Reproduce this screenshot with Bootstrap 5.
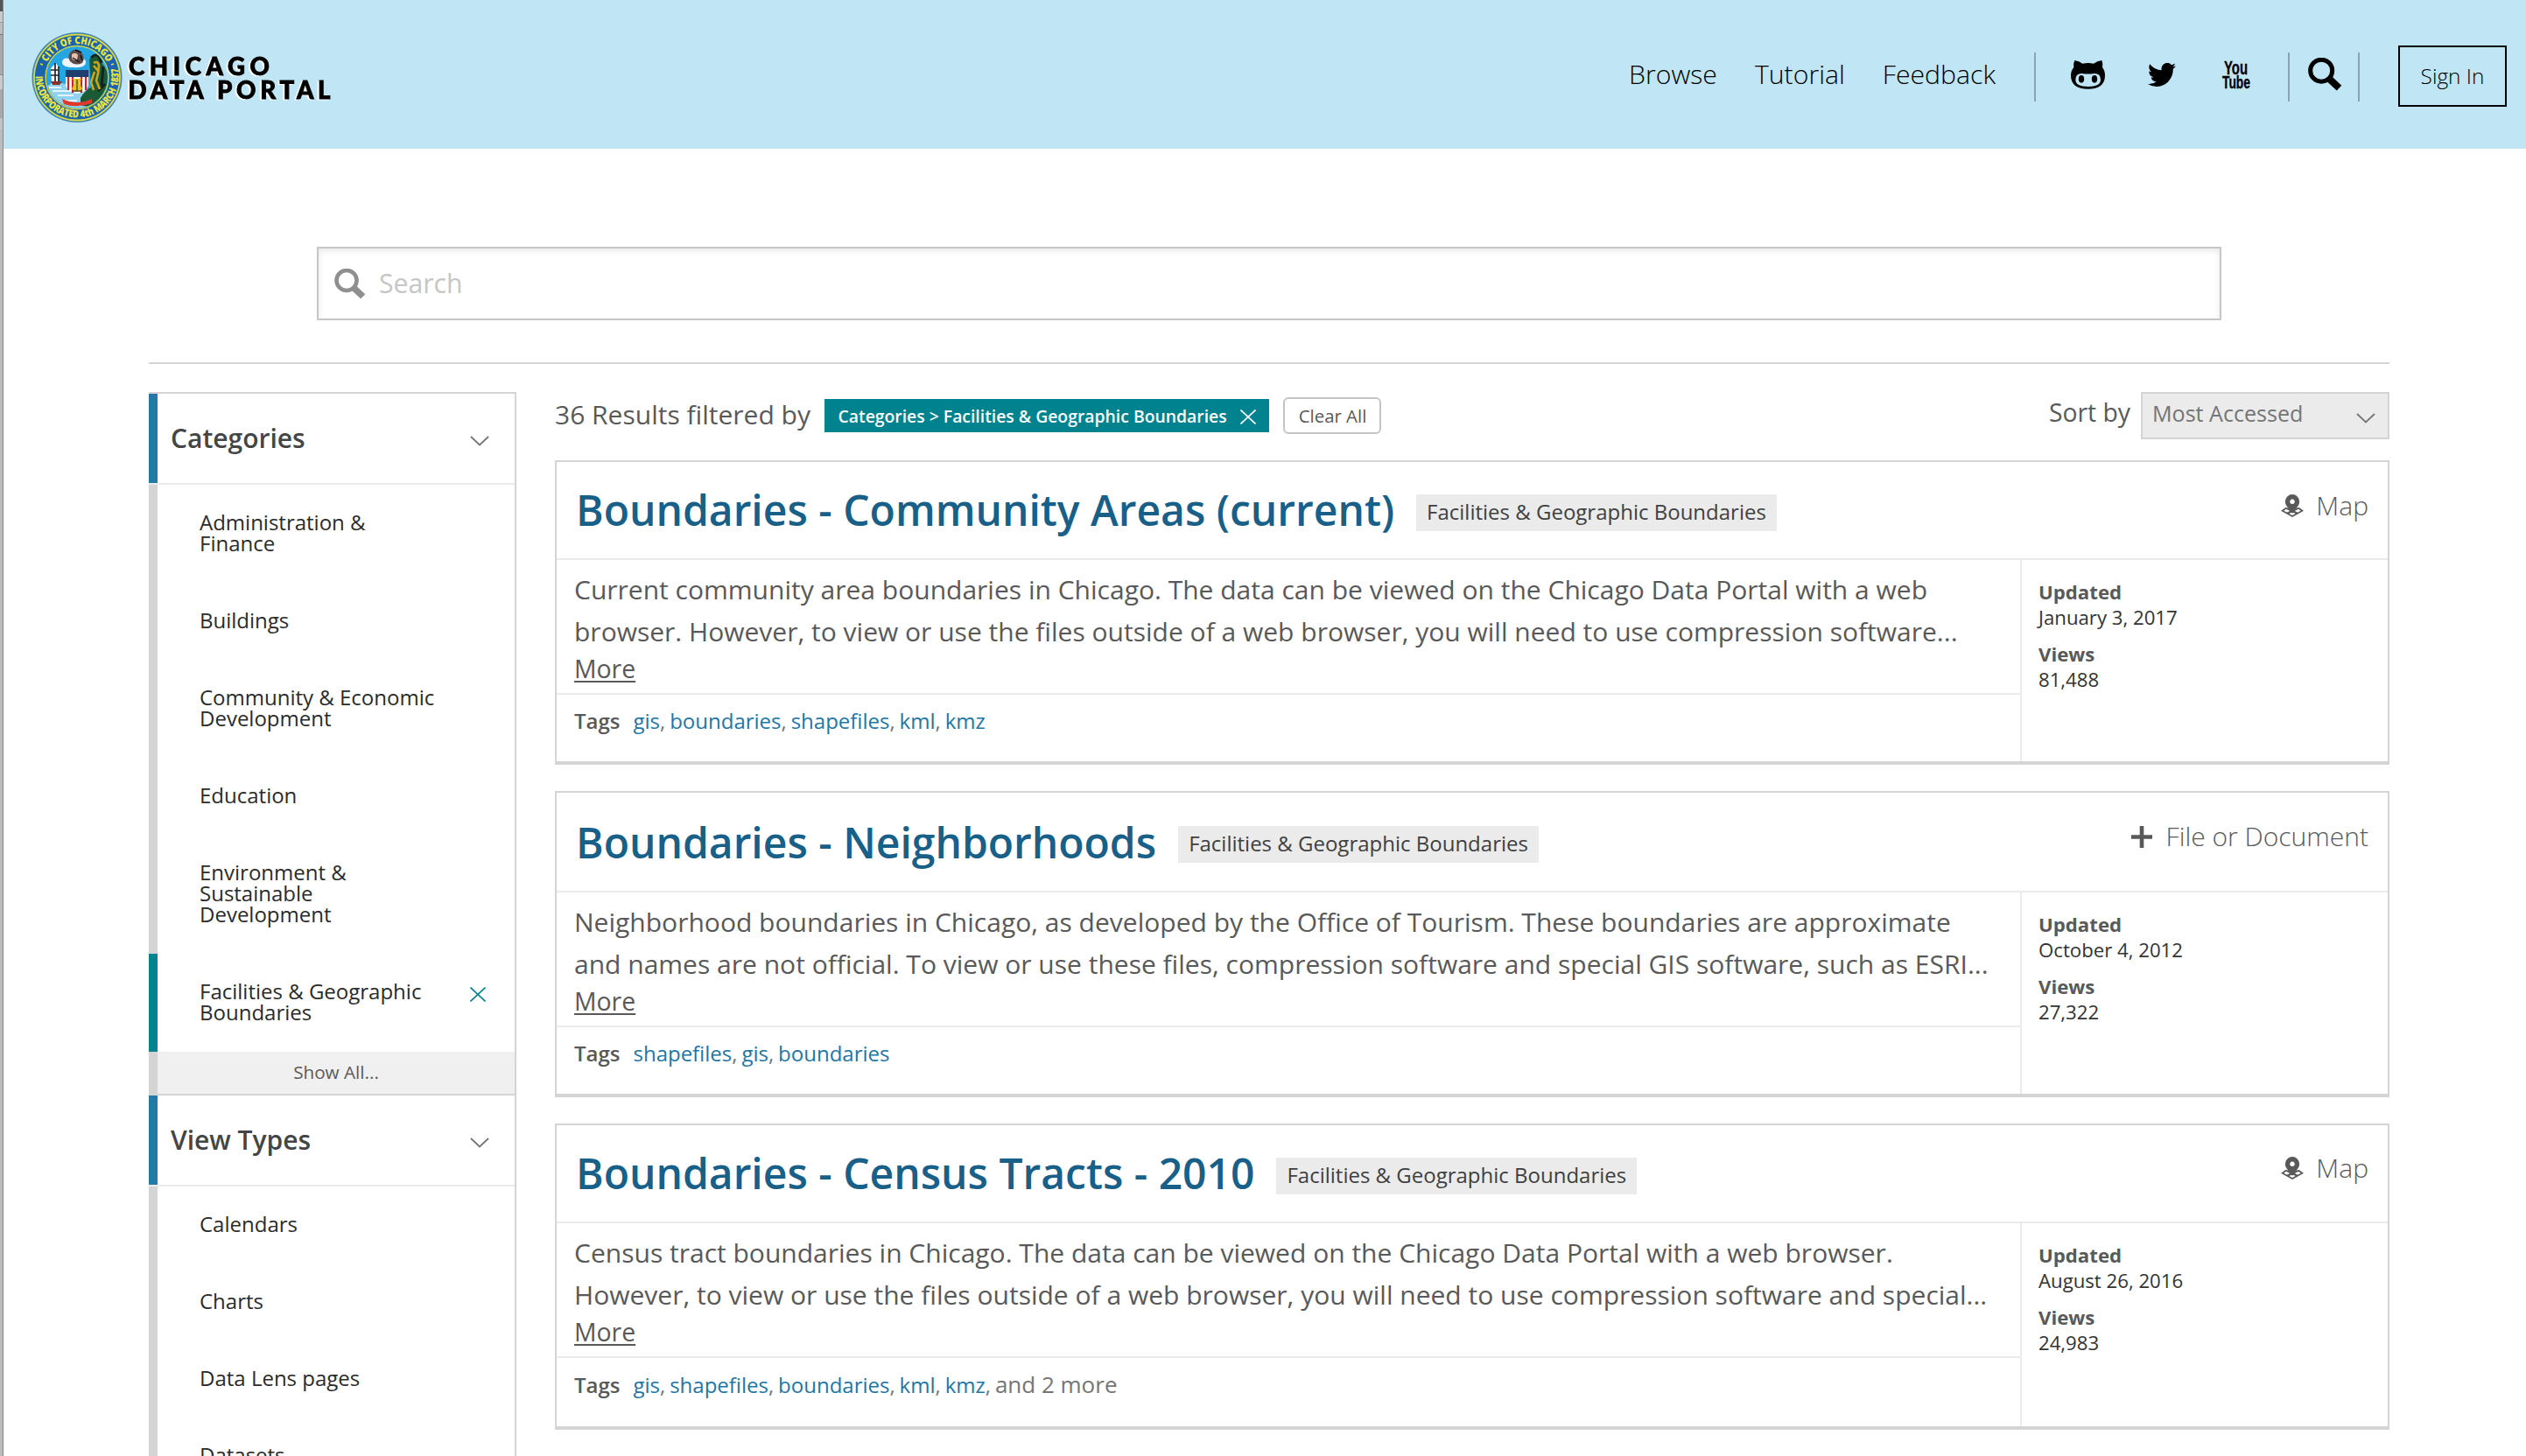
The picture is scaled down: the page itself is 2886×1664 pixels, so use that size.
<!DOCTYPE html>
<html lang="en">
<head>
<meta charset="utf-8">
<title>Chicago Data Portal</title>
<meta name="viewport" content="width=device-width, initial-scale=1">
<link rel="stylesheet" href="https://cdn.jsdelivr.net/npm/bootstrap@5.3.0/dist/css/bootstrap.min.css">
<style>
  body { font-family: "Open Sans", "Liberation Sans", sans-serif; color: #595959; background: #fff; height: 1664px; overflow: hidden; }
  a { text-decoration: none; }
  svg { display: block; flex: none; }
  .window-edge { width: 4px; flex: none; border-right: 1px solid #858585;
    background: linear-gradient(#555 0 13px, #cbcbcb 13px 25px, #999 25px 26px, #bdbdbd 26px 39px, #777 39px 40px, #a9a9a9 40px 85px, #888 85px 86px, #cbcbcb 86px 102px, #a9a9a9 102px 135px, #c4c4c4 135px 148px, #bcbcbc 148px); }
  .page-col { flex: 1 1 0; min-width: 0; }

  .site-header { height: 170px; background: #c0e5f4; padding: 0 22px 0 30px; }
  .brand-art { margin-top: 6px; }
  .brand-words { filter: drop-shadow(-1.5px 1px 0 #fff); }
  .brand-words text { font-family: Lato, "Open Sans", sans-serif; font-weight: 900; font-size: 27.6px; stroke: #000; stroke-width: .9px; }
  .top-links { gap: 44px; font-size: 30.2px; font-weight: 300; margin-right: 44px; }
  .top-links a:not(:last-child) { margin-right: -1px; }
  .top-links a, .signin { color: #000; }
  .icon-strip { color: #000; }
  .rule-v { width: 2px; height: 56px; background: #8ba4b0; margin-top: 6px; }
  .ico-cat { margin-left: 40px; }
  .ico-bird { margin-left: 49px; }
  .ico-tube { margin: 0 43px 0 53px; overflow: visible; }
  .ico-lens { margin: 0 18px 0 21px; }
  .signin { width: 124px; height: 70px; border: 2px solid #000; border-radius: 0; font-size: 24.4px; font-weight: 300; margin: 4px 0 0 44px; padding: 0; line-height: 66px; }

  .search-row { padding: 112px 348px 48px 358px; }
  .search-box { height: 84px; border: 2px solid #c6c6c6; box-shadow: inset 0 3px 7px rgba(0,0,0,.09); padding: 0 18px; gap: 15px; color: #c6c6c6; font-size: 30.2px; }
  .catalog { margin: 0 156px 0 166px; border-top: 2px solid #d4d4d4; padding-top: 32px; gap: 44px; }

  .facets { width: 420px; flex: none; border-top: 2px solid #d4d4d4; border-right: 2px solid #d4d4d4; }
  .facet-head { height: 102px; border-left: 10px solid #2379a8; padding: 0 29px 0 15px; color: #454545; font-size: 30px; font-weight: 600; }
  .facet-head span { margin-bottom: 1px; }
  .facet-head svg { margin-top: 6px; }
  .facet-line { height: 2px; background: #ebebeb; }
  .facet-item { border-left: 10px solid #d4d4d4; padding: 32px 33px 32px 48px; font-size: 24px; line-height: 24px; color: #2b2b2b; }
  .facet-item span { width: 272px; margin-top: -1px; margin-bottom: 1px; }
  .facet-item svg { margin-top: 6px; }
  .facet-item.chosen { border-left-color: #00838f; }
  .facet-all { height: 48px; border-left: 10px solid #d4d4d4; background: #f0f0f0; font-size: 20.7px; line-height: 47px; color: #595959; }
  .facet-all-line { height: 2px; background: #d4d4d4; }

  .results { width: 2096px; flex: none; }
  .result-bar { height: 54px; margin-bottom: 24px; }
  .result-count { font-size: 30px; line-height: 52px; width: 308px; white-space: nowrap; padding-bottom: 2px; }
  .filter-tag { width: 508px; height: 38px; background: #00838f; color: #fff; font-size: 19.38px; font-weight: 600; padding: 2px 15px 0 15.500px; line-height: 36px; white-space: nowrap; border-radius: 0; }
  .clear-all { width: 112px; height: 42px; border: 2px solid #c4c4c4; border-radius: 6px; color: #595959; background: #fff; font-size: 20.4px; line-height: 39px; padding: 0 0 0 1px; margin-left: 16px; }
  .sort-label { font-size: 28.3px; line-height: 46px; margin-right: 12px; }
  .sort-box { width: 284px; height: 54px; border: 2px solid #d4d4d4; background: #ebebeb; color: #757575; font-size: 25.1px; line-height: 44px; padding: 0 14px 0 11px; }
  .sort-box svg { margin-top: 22px; }

  .result-card { border: 2px solid #d4d4d4; border-bottom-width: 4px; border-radius: 0; margin-bottom: 30px; height: 350px; }
  .result-card.first-card { height: 348px; }
  .result-head { height: 110px; padding: 0 22px 0 22px; }
  .result-card.second-card .result-head { height: 112px; }
  .result-title { font-size: 48px; font-weight: 600; line-height: 60px; color: #186088; margin: 0 25px 0 0; }
  .second-card .result-title { margin-top: 1px; }
  .result-chip { background: #ebebeb; color: #404040; font-size: 24px; line-height: 40px; height: 42px; padding: 0 12px; margin-top: 6px; }
  .result-kind { font-size: 30px; font-weight: 300; gap: 14px; line-height: 40px; margin-bottom: 13px; }
  .first-card .result-kind { margin-bottom: 10px; }
  .second-card .result-kind { gap: 16px; margin-bottom: 12px; }
  .result-body { border-top: 2px solid #ebebeb; }
  .result-desc { padding: 10px 20px 0; height: 152px; font-size: 30.03px; line-height: 48px; }
  .more-link { display: block; font-size: 28.4px; line-height: 36px; color: #595959; text-decoration: underline; text-decoration-thickness: 2px; text-underline-offset: 3px; }
  .result-tags { border-top: 2px solid #ebebeb; padding: 15px 20px 0; font-size: 24px; line-height: 30px; color: #757575; word-spacing: -1.3px; }
  .result-tags strong { font-weight: 600; color: #595959; margin-right: 15px; }
  .result-tags a { color: #2276a5; }
  .result-tags .tag-rest { font-size: 26px; word-spacing: 0; }
  .result-stats { width: 420px; flex: none; border-left: 2px solid #ebebeb; padding: 23px 0 0 19px; font-size: 22.2px; line-height: 28.6px; color: #333; }
  .result-stats dt { font-weight: 700; color: #595959; }
  .result-stats dd { margin: 0 0 14px; }
</style>
</head>
<body class="d-flex">
<svg width="0" height="0" class="position-absolute" aria-hidden="true">
  <symbol id="i-lens" viewBox="0 0 116 114"><circle cx="45" cy="44" r="37.5" fill="none" stroke="currentColor" stroke-width="15"/><path d="M72 72 L106 104" stroke="currentColor" stroke-width="24"/></symbol>
  <symbol id="i-chev" viewBox="0 0 22 12"><path d="M1 1 L11 10.5 L21 1" fill="none" stroke="currentColor" stroke-width="1.8"/></symbol>
  <symbol id="i-x" viewBox="0 0 18 17"><path d="M.5 .5 L17.5 16.5 M17.5 .5 L.5 16.5" stroke="currentColor" stroke-width="1.6"/></symbol>
  <symbol id="i-map" viewBox="1095 404 80 84"><path d="M1114 454 L1100 463.500 L1135 483 L1170 463.500 L1156 454 M1116 473 L1130 465 M1154 473 L1140 465 M1114 455 L1154 474 M1156 455 L1116 474" fill="none" stroke="currentColor" stroke-width="5.5"/><path fill="currentColor" fill-rule="evenodd" d="M1135 406 a25 25 0 0 1 25 25 c0 15 -14 25 -25 42 c-11 -17 -25 -27 -25 -42 a25 25 0 0 1 25 -25z M1135 423 a8.500 8.500 0 1 0 .01 0z"/></symbol>
</svg>

<div class="window-edge"></div>
<div class="page-col">
  <header class="site-header d-flex align-items-center">
    <a href="#" class="d-flex" aria-label="Chicago Data Portal">
      <svg class="brand-art" width="350" height="108" viewBox="34 34 350 108">
        <defs>
          <path id="arcTop" d="M49.500 88.500 A38.500 38.500 0 0 1 126.500 88.500"/>
          <path id="arcLow" d="M41 80 A47.500 47.500 0 1 0 135 80"/>
          <clipPath id="scene"><circle cx="88" cy="88.500" r="35"/></clipPath>
        </defs>
        <circle cx="88" cy="88.500" r="51.500" fill="#3d82bd"/>
        <circle cx="88" cy="88.500" r="49" fill="#1c63ae" stroke="#d5d942" stroke-width="1.800"/>
        <circle cx="88" cy="88.500" r="36" fill="#24a5e4" stroke="#c9d24a" stroke-width="1.400"/>
        <g clip-path="url(#scene)">
          <path d="M52 98 q16 -6 30 0 t40 4 v26 h-70z" fill="#8fd3f0"/>
          <path d="M56 100h14M60 104h16M66 109h18M72 115h16M58 96h8M76 104h6" stroke="#fff" stroke-width="1.300"/>
          <path d="M92 112 Q98 102 104 100 L102 68 Q108 60 114 68 L124 84 V112 L108 124 L92 120Z" fill="#1b5a37"/>
          <path d="M104 66 q8 -8 12 6 M118 76 l-2 22 M112 104 l8 -8" stroke="#12231c" stroke-width="3" fill="none"/>
        </g>
        <path d="M71 71 q1 -6 8 -4 q4 -5 9 0 q11 -1 10 5 q-1 6 -14 5 q-13 0 -13 -6z" fill="#eef4f8"/>
        <path d="M80 60 q5 -6 12 -1 q6 6 2 13 q-8 4 -14 -2 q-3 -5 0 -10z" fill="#5b4a4a"/>
        <path d="M82 62 q5 -3 7 1 l-1 5 q-4 2 -6 -1z" fill="#e6c0b0"/>
        <path d="M86 57l7 3M83 66l8 5M92 63l2 6" stroke="#111" stroke-width="1.400"/>
        <path d="M58 78 l6 -6 l4 7 l-1 15 h-8z" fill="#fff"/><path d="M58 80h9M58 86h10M63 72v22M67 76v18" stroke="#23232b" stroke-width="1.700"/>
        <path d="M58 93 h13 l-3 4 h-8z" fill="#8c2f2a"/>
        <path d="M75 80 h26 v18 q-3 8 -13 9 q-10 -1 -13 -9z" fill="#fff"/>
        <path d="M78 88v15M83 88v18M93 88v18M98 88v15" stroke="#c8232e" stroke-width="2.200"/>
        <path d="M75 80h26v8h-26z" fill="#1c3f6e"/>
        <path d="M83 90 h10 l-2 5 l3 7 q-6 3 -12 0 l3 -7z" fill="#e3c51c"/><path d="M88 91v13M83 104h10" stroke="#4b4210" stroke-width="1.300"/>
        <path d="M107 72 q5 -3 6 3 l-1 9 l-2 8 l4 10 M108 82 l-4 12 l3 9 M107 75 l5 6" stroke="#d0a51c" stroke-width="2.600" fill="none"/>
        <path d="M71 113 q17 8 34 0 v5 q-17 6 -32 1z" fill="#e2382a"/>
        <g font-family="Open Sans, sans-serif" font-weight="800" fill="#ebe63c">
          <text font-size="11.500" textLength="85" lengthAdjust="spacingAndGlyphs"><textPath href="#arcTop" startOffset="18">CITY OF CHICAGO</textPath></text>
          <text font-size="11.500" textLength="158" lengthAdjust="spacingAndGlyphs"><textPath href="#arcLow" startOffset="7">INCORPORATED 4th MARCH 1837</textPath></text>
        </g>
        <path d="M46 73 l3 1 M130 73 l-3 1" stroke="#e2df3a" stroke-width="1.600"/>
        <g class="brand-words">
          <text x="147" y="85.500" textLength="161">CHICAGO</text>
          <text x="146.500" y="113" textLength="231">DATA PORTAL</text>
        </g>
      </svg>
    </a>
    <nav class="icon-strip d-flex align-items-center ms-auto">
      <div class="top-links d-flex"><a href="#">Browse</a><a href="#">Tutorial</a><a href="#">Feedback</a></div>
      <div class="rule-v"></div>
      <svg class="ico-cat" width="39" height="33" viewBox="168 84 117 99"><path fill-rule="evenodd" d="M181 84 Q196 86 208 95 Q227 91 246 95 Q258 86 274 84 Q279 97 276 108 Q285 119 285 135 Q285 182 227 182 Q168 182 168 135 Q168 119 178 108 Q175 97 181 84Z M205 129 Q184 129 184 151 Q184 174 227 174 Q270 174 270 151 Q270 129 249 129 Q227 132 205 129Z"/><ellipse cx="204" cy="148" rx="9.500" ry="13"/><ellipse cx="249" cy="148" rx="9.500" ry="13"/></svg>
      <svg class="ico-bird" width="32" height="27" viewBox="0 2 16 13" preserveAspectRatio="none"><path d="M5.026 15c6.038 0 9.341-5.003 9.341-9.334q.002-.211-.006-.422A6.700 6.700 0 0 0 16 3.542a6.700 6.700 0 0 1-1.889.518 3.300 3.300 0 0 0 1.447-1.817 6.500 6.500 0 0 1-2.087.793A3.286 3.286 0 0 0 7.875 6.030a9.320 9.320 0 0 1-6.767-3.429 3.290 3.290 0 0 0 1.018 4.382A3.300 3.300 0 0 1 .640 6.575v.045a3.290 3.290 0 0 0 2.632 3.218 3.200 3.200 0 0 1-.865.115 3 3 0 0 1-.614-.057 3.280 3.280 0 0 0 3.067 2.277A6.600 6.600 0 0 1 .780 13.580a6 6 0 0 1-.780-.045A9.340 9.340 0 0 0 5.026 15"/></svg>
      <svg class="ico-tube" width="32" height="34" viewBox="0 0 32 34" font-family="Liberation Sans, sans-serif" font-weight="700" stroke="#000" stroke-width=".3"><text x="2" y="16.500" font-size="22" textLength="27" lengthAdjust="spacingAndGlyphs">You</text><text x="0" y="32.500" font-size="20.500" textLength="32" lengthAdjust="spacingAndGlyphs">Tube</text></svg>
      <div class="rule-v"></div>
      <svg class="ico-lens" width="39" height="38"><use href="#i-lens"/></svg>
      <div class="rule-v"></div>
      <a href="#" class="btn signin">Sign In</a>
    </nav>
  </header>

  <div class="search-row">
    <div class="search-box d-flex align-items-center">
      <svg width="36" height="35" color="#8f8f8f"><use href="#i-lens"/></svg>
      <span>Search</span>
    </div>
  </div>

  <main class="catalog d-flex align-items-start">
    <aside class="facets">
      <div class="facet-head d-flex align-items-center justify-content-between"><span>Categories</span><svg width="22" height="12" color="#757575"><use href="#i-chev"/></svg></div>
      <div class="facet-line"></div>
      <div class="facet-item d-flex"><span>Administration &amp; Finance</span></div>
      <div class="facet-item d-flex"><span>Buildings</span></div>
      <div class="facet-item d-flex"><span>Community &amp; Economic Development</span></div>
      <div class="facet-item d-flex"><span>Education</span></div>
      <div class="facet-item d-flex"><span>Environment &amp; Sustainable Development</span></div>
      <div class="facet-item chosen d-flex justify-content-between"><span>Facilities &amp; Geographic Boundaries</span><svg width="18" height="17" color="#00838f"><use href="#i-x"/></svg></div>
      <div class="facet-all text-center">Show All...</div>
      <div class="facet-all-line"></div>
      <div class="facet-head d-flex align-items-center justify-content-between"><span>View Types</span><svg width="22" height="12" color="#757575"><use href="#i-chev"/></svg></div>
      <div class="facet-line"></div>
      <div class="facet-item d-flex"><span>Calendars</span></div>
      <div class="facet-item d-flex"><span>Charts</span></div>
      <div class="facet-item d-flex"><span>Data Lens pages</span></div>
      <div class="facet-item d-flex"><span>Datasets</span></div>
    </aside>

    <section class="results">
      <div class="result-bar d-flex align-items-center">
        <div class="result-count">36 Results filtered by</div>
        <div class="filter-tag d-flex align-items-center justify-content-between"><span>Categories &gt; Facilities &amp; Geographic Boundaries</span><svg width="18" height="17"><use href="#i-x"/></svg></div>
        <button class="btn clear-all">Clear All</button>
        <div class="sort-label ms-auto align-self-start">Sort by</div>
        <div class="sort-box d-flex justify-content-between"><span>Most Accessed</span><svg width="22" height="12"><use href="#i-chev"/></svg></div>
      </div>

      <article class="card result-card first-card">
        <div class="result-head d-flex align-items-center">
          <h2 class="result-title">Boundaries - Community Areas (current)</h2>
          <span class="result-chip">Facilities &amp; Geographic Boundaries</span>
          <div class="result-kind d-flex align-items-center ms-auto"><svg width="26" height="28"><use href="#i-map"/></svg>Map</div>
        </div>
        <div class="result-body d-flex flex-grow-1">
          <div class="flex-grow-1">
            <div class="result-desc">Current community area boundaries in Chicago. The data can be viewed on the Chicago Data Portal with a web<br>browser. However, to view or use the files outside of a web browser, you will need to use compression software...<a href="#" class="more-link">More</a></div>
            <div class="result-tags"><strong>Tags</strong><a href="#">gis</a>, <a href="#">boundaries</a>, <a href="#">shapefiles</a>, <a href="#">kml</a>, <a href="#">kmz</a></div>
          </div>
          <dl class="result-stats mb-0"><dt>Updated</dt><dd>January 3, 2017</dd><dt>Views</dt><dd>81,488</dd></dl>
        </div>
      </article>

      <article class="card result-card second-card">
        <div class="result-head d-flex align-items-center">
          <h2 class="result-title">Boundaries - Neighborhoods</h2>
          <span class="result-chip">Facilities &amp; Geographic Boundaries</span>
          <div class="result-kind d-flex align-items-center ms-auto"><svg width="24" height="25" viewBox="0 0 24 25"><path d="M0 12.500h24M12 0v25" stroke="currentColor" stroke-width="4.600"/></svg>File or Document</div>
        </div>
        <div class="result-body d-flex flex-grow-1">
          <div class="flex-grow-1">
            <div class="result-desc">Neighborhood boundaries in Chicago, as developed by the Office of Tourism. These boundaries are approximate<br>and names are not official. To view or use these files, compression software and special GIS software, such as ESRI...<a href="#" class="more-link">More</a></div>
            <div class="result-tags"><strong>Tags</strong><a href="#">shapefiles</a>, <a href="#">gis</a>, <a href="#">boundaries</a></div>
          </div>
          <dl class="result-stats mb-0"><dt>Updated</dt><dd>October 4, 2012</dd><dt>Views</dt><dd>27,322</dd></dl>
        </div>
      </article>

      <article class="card result-card">
        <div class="result-head d-flex align-items-center">
          <h2 class="result-title">Boundaries - Census Tracts - 2010</h2>
          <span class="result-chip">Facilities &amp; Geographic Boundaries</span>
          <div class="result-kind d-flex align-items-center ms-auto"><svg width="26" height="28"><use href="#i-map"/></svg>Map</div>
        </div>
        <div class="result-body d-flex flex-grow-1">
          <div class="flex-grow-1">
            <div class="result-desc">Census tract boundaries in Chicago. The data can be viewed on the Chicago Data Portal with a web browser.<br>However, to view or use the files outside of a web browser, you will need to use compression software and special...<a href="#" class="more-link">More</a></div>
            <div class="result-tags"><strong>Tags</strong><a href="#">gis</a>, <a href="#">shapefiles</a>, <a href="#">boundaries</a>, <a href="#">kml</a>, <a href="#">kmz</a>, <span class="tag-rest">and 2 more</span></div>
          </div>
          <dl class="result-stats mb-0"><dt>Updated</dt><dd>August 26, 2016</dd><dt>Views</dt><dd>24,983</dd></dl>
        </div>
      </article>
    </section>
  </main>
</div>
<script src="https://cdn.jsdelivr.net/npm/bootstrap@5.3.0/dist/js/bootstrap.bundle.min.js"></script>
</body>
</html>
